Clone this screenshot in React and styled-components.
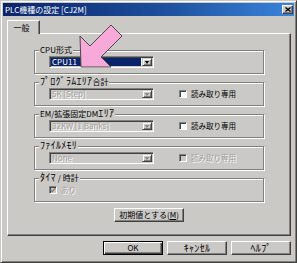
import React from 'react';
import styled, { createGlobalStyle, css } from 'styled-components';

const FACE = '#cbc9c6';
const SHADOW = '#808080';
const DARK = '#404040';
const HI = '#ffffff';
const GRAYTEXT = '#a2a09d';
const FONT = '"Noto Sans CJK JP", "Noto Sans", sans-serif';

const GlobalStyle = createGlobalStyle`
  html, body { margin: 0; padding: 0; background: #ffffff; }
  body { font-family: ${FONT}; }
  #root { width: 297px; height: 263px; }
`;

const Window = styled.div`
  position: relative;
  width: 297px;
  height: 263px;
  box-sizing: border-box;
  background: ${FACE};
  border: 1px solid;
  border-color: ${FACE} ${DARK} ${DARK} ${FACE};
  box-shadow: inset 1px 1px 0 ${HI}, inset -1px -1px 0 ${SHADOW};
  padding: 2px;
  display: flex;
  flex-direction: column;
  font-family: ${FONT};
  font-size: 7.5px;
  color: #000;
`;

const TitleBar = styled.div`
  height: 13px;
  flex: none;
  display: flex;
  align-items: center;
  justify-content: space-between;
  padding: 0 1px 0 2px;
  background: linear-gradient(to right, #0a246a 0%, #1d4f9c 55%, #3a84dc 100%);
`;

const TitleText = styled.span`
  color: #ffffff;
  font-size: 8px;
  line-height: 13px;
  white-space: nowrap;
`;

const CloseButton = styled.div`
  width: 11px;
  height: 9px;
  box-sizing: border-box;
  background: ${FACE};
  border: 1px solid;
  border-color: ${HI} ${DARK} ${DARK} ${HI};
  box-shadow: inset -1px -1px 0 ${SHADOW};
  display: flex;
  align-items: center;
  justify-content: center;
`;

const Body = styled.div`
  flex: 1;
  display: flex;
  flex-direction: column;
  padding: 4px 3px 0 4px;
`;

const TabStrip = styled.div`
  height: 13px;
  display: flex;
  align-items: flex-end;
`;

const Tab = styled.div`
  position: relative;
  z-index: 1;
  width: 33px;
  height: 14px;
  margin-bottom: -1px;
  box-sizing: border-box;
  background: ${FACE};
  border: 1px solid;
  border-color: ${HI} ${DARK} transparent ${HI};
  border-bottom: none;
  box-shadow: inset -1px 0 0 ${SHADOW};
  border-radius: 1px 1px 0 0;
  display: flex;
  align-items: center;
  justify-content: center;
  padding-right: 4px;
  font-size: 8px;
`;

const Panel = styled.div`
  height: 203px;
  box-sizing: border-box;
  border: 1px solid;
  border-color: ${HI} ${DARK} ${DARK} ${HI};
  box-shadow: inset -1px -1px 0 ${SHADOW};
  display: flex;
  flex-direction: column;
  align-items: center;
  padding-top: 10px;
`;

const Group = styled.fieldset`
  width: 230px;
  min-width: 0;
  box-sizing: border-box;
  margin: ${p => (p.$first ? 0 : 2)}px 0 0 0;
  padding: 0 0 5px 0;
  border: 1px solid ${SHADOW};
  box-shadow: 1px 1px 0 ${HI}, inset 1px 1px 0 ${HI};
`;

const Legend = styled.legend`
  margin-left: 4px;
  padding: 0 1px;
  height: 12px;
  background: ${FACE};
  font-size: 8px;
  line-height: 12px;
  white-space: nowrap;
`;

/* half-width katakana, drawn larger so it reads like the bitmap UI font */
const Kana = styled.span`
  font-size: 10px;
  line-height: 0;
  letter-spacing: 0.3px;
`;

const FieldRow = styled.div`
  height: 12px;
  display: flex;
  align-items: center;
  padding-left: 14px;
`;

const Combo = styled.div`
  width: 105px;
  height: 12px;
  box-sizing: border-box;
  border: 1px solid;
  border-color: ${SHADOW} ${HI} ${HI} ${SHADOW};
  box-shadow: inset 1px 1px 0 ${DARK}, inset -1px -1px 0 ${FACE};
  background: ${p => (p.$disabled ? FACE : '#ffffff')};
  padding: 1px;
  display: flex;
`;

const ComboValue = styled.div`
  flex: 1;
  margin-right: 1px;
  padding-left: 1px;
  display: flex;
  align-items: center;
  font-size: 8px;
  line-height: 8px;
  white-space: nowrap;
  ${p =>
    p.$selected
      ? css`
          background: #0a246a;
          color: #ffffff;
        `
      : css`
          color: ${GRAYTEXT};
          text-shadow: 1px 1px 0 ${HI};
        `}
`;

const DropButton = styled.div`
  width: 10px;
  height: 8px;
  box-sizing: border-box;
  background: ${FACE};
  border: 1px solid;
  border-color: ${FACE} ${DARK} ${DARK} ${FACE};
  box-shadow: inset 1px 1px 0 ${HI}, inset -1px -1px 0 ${SHADOW};
  display: flex;
  align-items: center;
  justify-content: center;
`;

const Triangle = styled.div`
  width: 0;
  height: 0;
  border-left: 2.5px solid transparent;
  border-right: 2.5px solid transparent;
  border-top: 3px solid ${p => (p.$disabled ? SHADOW : '#000')};
  margin-top: 1px;
`;

const CheckRow = styled.label`
  display: flex;
  align-items: center;
  gap: 4px;
  margin-left: ${p => p.$offset}px;
  white-space: nowrap;
  font-size: 7.5px;
  line-height: 12px;
  color: ${p => (p.$disabled ? GRAYTEXT : '#000')};
  text-shadow: ${p => (p.$disabled ? `1px 1px 0 ${HI}` : 'none')};
`;

const Box = styled.span`
  width: 8px;
  height: 8px;
  box-sizing: border-box;
  border: 1px solid;
  border-color: ${SHADOW} ${HI} ${HI} ${SHADOW};
  box-shadow: inset 1px 1px 0 ${DARK};
  background: ${p => (p.$disabled ? FACE : '#ffffff')};
  display: flex;
  align-items: center;
  justify-content: center;
`;

const Button = styled.button`
  width: ${p => p.$w}px;
  height: 14px;
  box-sizing: border-box;
  margin: 0;
  padding: 0;
  background: ${FACE};
  font-family: ${FONT};
  font-size: 8px;
  line-height: 12px;
  color: #000;
  display: flex;
  align-items: center;
  justify-content: center;
  ${p =>
    p.$default
      ? css`
          border: 1px solid #000;
          box-shadow: inset 1px 1px 0 ${HI}, inset -1px -1px 0 ${DARK}, inset -2px -2px 0 ${SHADOW};
        `
      : css`
          border: 1px solid;
          border-color: ${HI} ${DARK} ${DARK} ${HI};
          box-shadow: inset -1px -1px 0 ${SHADOW};
        `}
`;

const ResetButton = styled(Button)`
  margin-top: 6px;
`;

const ButtonRow = styled.div`
  margin-top: 5px;
  display: flex;
  justify-content: flex-end;
  gap: 4px;
`;

const Overlay = styled.svg`
  position: absolute;
  left: 0;
  top: 0;
  pointer-events: none;
`;

function ComboBox({ value, selected, disabled }) {
  return (
    <Combo $disabled={disabled}>
      <ComboValue $selected={selected}>{value}</ComboValue>
      <DropButton>
        <Triangle $disabled={disabled} />
      </DropButton>
    </Combo>
  );
}

function CheckBox({ label, disabled, checked, offset }) {
  return (
    <CheckRow $disabled={disabled} $offset={offset}>
      <Box $disabled={disabled}>
        {checked && (
          <svg width="6" height="6" viewBox="0 0 6 6">
            <path d="M0.5 2.8 L2.2 4.5 L5.5 1.2" fill="none" stroke={SHADOW} strokeWidth="1.3" />
          </svg>
        )}
      </Box>
      {label}
    </CheckRow>
  );
}

export default function App() {
  return (
    <>
      <GlobalStyle />
      <Window>
        <TitleBar>
          <TitleText>PLC機種の設定 [CJ2M]</TitleText>
          <CloseButton>
            <svg width="6" height="5" viewBox="0 0 6 5">
              <path d="M0.5 0.5 L5.5 4.5 M5.5 0.5 L0.5 4.5" stroke="#000" strokeWidth="1.3" />
            </svg>
          </CloseButton>
        </TitleBar>
        <Body>
          <TabStrip>
            <Tab>一般</Tab>
          </TabStrip>
          <Panel>
            <Group $first>
              <Legend>CPU形式</Legend>
              <FieldRow>
                <ComboBox value="CPU11" selected />
              </FieldRow>
            </Group>
            <Group>
              <Legend>
                <Kana>ﾌﾟﾛｸﾞﾗﾑｴﾘｱ</Kana>合計
              </Legend>
              <FieldRow>
                <ComboBox value="5K [Step]" disabled />
                <CheckBox label="読み取り専用" offset={25} />
              </FieldRow>
            </Group>
            <Group>
              <Legend>
                EM/拡張固定DM<Kana>ｴﾘｱ</Kana>
              </Legend>
              <FieldRow>
                <ComboBox value="32KW [1 Banks]" disabled />
                <CheckBox label="読み取り専用" offset={25} />
              </FieldRow>
            </Group>
            <Group>
              <Legend>
                <Kana>ﾌｧｲﾙﾒﾓﾘ</Kana>
              </Legend>
              <FieldRow>
                <ComboBox value="None" disabled />
                <CheckBox label="読み取り専用" offset={25} disabled />
              </FieldRow>
            </Group>
            <Group>
              <Legend>
                <Kana>ﾀｲﾏ</Kana> / 時計
              </Legend>
              <FieldRow>
                <CheckBox label="あり" offset={0} disabled checked />
              </FieldRow>
            </Group>
            <ResetButton $w={70}>
              初期値とする(<u>M</u>)
            </ResetButton>
          </Panel>
          <ButtonRow>
            <Button $w={60} $default>OK</Button>
            <Button $w={60}>
              <Kana>ｷｬﾝｾﾙ</Kana>
            </Button>
            <Button $w={60}>
              <Kana>ﾍﾙﾌﾟ</Kana>
            </Button>
          </ButtonRow>
        </Body>
        <Overlay width="297" height="263" viewBox="0 0 297 263">
          <polygon
            points="80,66 110,66 100,56 121,35 110,24 89,45 79,35"
            fill="#f7a9d9"
            stroke="#4a4a4a"
            strokeWidth="1"
            strokeLinejoin="miter"
          />
        </Overlay>
      </Window>
    </>
  );
}
